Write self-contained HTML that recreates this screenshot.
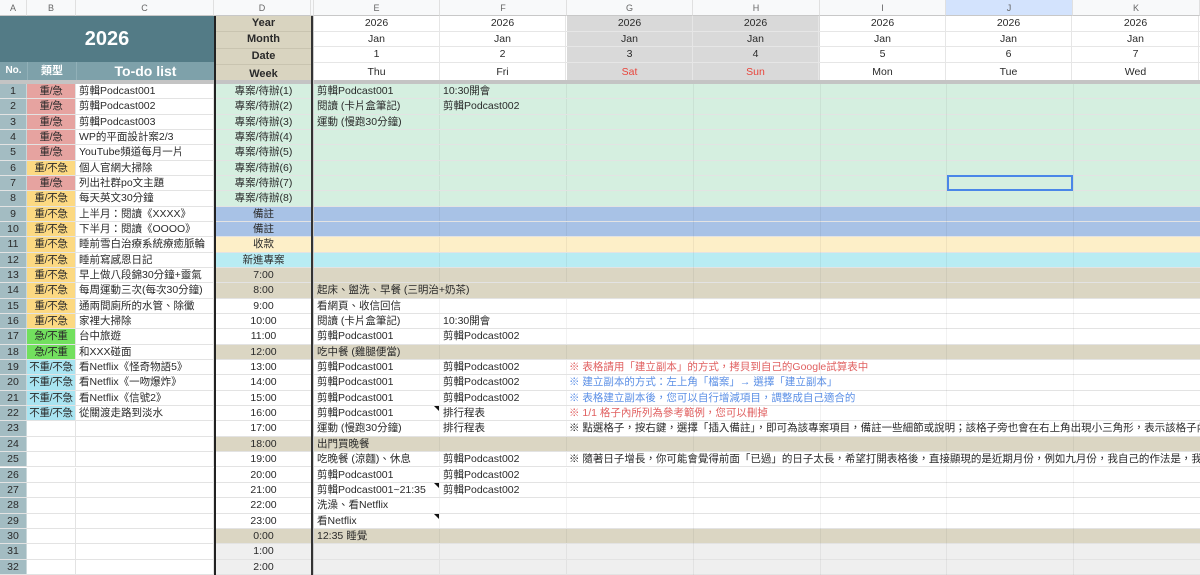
<!DOCTYPE html>
<html><head><meta charset="utf-8">
<style>
*{margin:0;padding:0;box-sizing:border-box}
body{width:1200px;height:575px;overflow:hidden;background:#fff;font-family:"Liberation Sans","Noto Sans CJK TC",sans-serif;font-size:10.5px;color:#2a2a2a;position:relative}
.abs{position:absolute}
.ch{position:absolute;top:0;height:16px;background:#f8f9fa;border-right:1px solid #e0e0e0;border-bottom:1px solid #c8c8c8;color:#666;font-size:9px;text-align:center;line-height:16px}
.hr{position:absolute;left:314px;width:886px;height:15.5px;border-bottom:1px solid #e6e6e6}
.hr span{position:absolute;top:0;text-align:center;line-height:15px;width:126px;border-right:1px solid #e6e6e6;height:100%}
.r{position:absolute;left:0;width:1200px;height:15.34px;border-bottom:1px solid #e3e3e3;line-height:15px;white-space:nowrap}
.r i{font-style:normal;position:absolute;top:0;height:100%;overflow:hidden}
.a{left:0;width:27px;background:#a3bcc2;text-align:center;border-right:1px solid #c9d7da}
.b{left:27px;width:49px;text-align:center;border-right:1px solid #e3e3e3;letter-spacing:-0.3px}
.c{left:76px;width:138px;background:#fff;padding-left:3px;border-right:1px solid #e3e3e3}
.d{left:216px;width:95px;text-align:center}
.e{left:314px;width:126px;padding-left:3px;border-right:1px solid rgba(0,0,0,.05)}
.f{left:440px;width:127px;padding-left:3px;border-right:1px solid rgba(0,0,0,.05)}
.n{left:567px;width:633px;padding-left:2px;overflow:hidden}
.k1{background:#e6a3a0}.k2{background:#fcd982}.k3{background:#72e05e}.k4{background:#a9e4f1}
.g{background:#d5efe0}.bl{background:#a8c2e6}.y{background:#fdefc8}.cy{background:#b8ecf3}.be{background:#dbd6c3}.gr{background:#efefef}.w{background:#fff}
.vl{position:absolute;top:84px;height:491px;width:1px;background:rgba(0,0,0,.05)}
.red{color:#e06060}.blu{color:#5b8fe6}
.tri{position:absolute;width:0;height:0;border-top:5px solid #111;border-left:5px solid transparent}
</style></head><body>
<div class="ch" style="left:0;width:27px">A</div>
<div class="ch" style="left:27px;width:49px">B</div>
<div class="ch" style="left:76px;width:138px">C</div>
<div class="ch" style="left:214px;width:97px">D</div>
<div class="ch" style="left:311px;width:3px"></div>
<div class="ch" style="left:314px;width:126px">E</div>
<div class="ch" style="left:440px;width:127px">F</div>
<div class="ch" style="left:567px;width:126px">G</div>
<div class="ch" style="left:693px;width:127px">H</div>
<div class="ch" style="left:820px;width:126px">I</div>
<div class="ch" style="left:946px;width:127px;background:#d3e3fd">J</div>
<div class="ch" style="left:1073px;width:127px">K</div>

<div class="abs" style="left:0;top:16px;width:214px;height:46px;background:#537b86;color:#fff;font-weight:bold;font-size:20px;text-align:center;line-height:46px">2026</div>
<div class="abs" style="left:0;top:62px;width:27px;height:18px;background:#7ea1aa;color:#fff;font-weight:bold;font-size:10px;text-align:center;line-height:18px">No.</div>
<div class="abs" style="left:27px;top:62px;width:49px;height:18px;background:#7ea1aa;color:#fff;font-weight:bold;font-size:11px;text-align:center;line-height:18px;border-left:1px solid #91b0b8">類型</div>
<div class="abs" style="left:76px;top:62px;width:138px;height:18px;background:#7ea1aa;color:#fff;font-weight:bold;font-size:14px;text-align:center;line-height:18px;border-left:1px solid #91b0b8">To-do list</div>
<div class="abs" style="left:216px;top:16px;width:95px;height:64px;background:#d9d4c0;font-weight:bold;text-align:center;line-height:15.3px;font-size:11px">
<div style="border-bottom:1px solid #c9c4b0">Year</div><div style="border-bottom:1px solid #c9c4b0">Month</div><div style="border-bottom:1px solid #c9c4b0">Date</div><div style="line-height:18px">Week</div></div>
<div class="abs" style="left:567px;top:16px;width:253px;height:64px;background:#d9d9d9"></div>
<div class="hr" style="top:16px"><span style="left:0">2026</span><span style="left:126px">2026</span><span style="left:253px">2026</span><span style="left:379px">2026</span><span style="left:506px">2026</span><span style="left:632px">2026</span><span style="left:759px">2026</span></div>
<div class="hr" style="top:31.5px"><span style="left:0">Jan</span><span style="left:126px">Jan</span><span style="left:253px">Jan</span><span style="left:379px">Jan</span><span style="left:506px">Jan</span><span style="left:632px">Jan</span><span style="left:759px">Jan</span></div>
<div class="hr" style="top:47px"><span style="left:0">1</span><span style="left:126px">2</span><span style="left:253px">3</span><span style="left:379px">4</span><span style="left:506px">5</span><span style="left:632px">6</span><span style="left:759px">7</span></div>
<div class="hr" style="top:62.5px;height:17px;border:none"><span style="left:0;line-height:18px">Thu</span><span style="left:126px;line-height:18px">Fri</span><span style="left:253px;line-height:18px;color:#e8453c">Sat</span><span style="left:379px;line-height:18px;color:#e8453c">Sun</span><span style="left:506px;line-height:18px">Mon</span><span style="left:632px;line-height:18px">Tue</span><span style="left:759px;line-height:18px">Wed</span></div>
<div class="abs" style="left:0;top:80px;width:1200px;height:4px;background:#c4c4c4"></div>

<div class="r g" style="top:84px"><i class="a">1</i><i class="b k1">重/急</i><i class="c">剪輯Podcast001</i><i class="d">專案/待辦(1)</i><i class="e">剪輯Podcast001</i><i class="f">10:30開會</i></div>
<div class="r g" style="top:99.34px"><i class="a">2</i><i class="b k1">重/急</i><i class="c">剪輯Podcast002</i><i class="d">專案/待辦(2)</i><i class="e">閱讀 (卡片盒筆記)</i><i class="f">剪輯Podcast002</i></div>
<div class="r g" style="top:114.68px"><i class="a">3</i><i class="b k1">重/急</i><i class="c">剪輯Podcast003</i><i class="d">專案/待辦(3)</i><i class="e">運動 (慢跑30分鐘)</i><i class="f"></i></div>
<div class="r g" style="top:130.02px"><i class="a">4</i><i class="b k1">重/急</i><i class="c">WP的平面設計案2/3</i><i class="d">專案/待辦(4)</i><i class="e"></i><i class="f"></i></div>
<div class="r g" style="top:145.36px"><i class="a">5</i><i class="b k1">重/急</i><i class="c">YouTube頻道每月一片</i><i class="d">專案/待辦(5)</i><i class="e"></i><i class="f"></i></div>
<div class="r g" style="top:160.7px"><i class="a">6</i><i class="b k2">重/不急</i><i class="c">個人官網大掃除</i><i class="d">專案/待辦(6)</i><i class="e"></i><i class="f"></i></div>
<div class="r g" style="top:176.04px"><i class="a">7</i><i class="b k1">重/急</i><i class="c">列出社群po文主題</i><i class="d">專案/待辦(7)</i><i class="e"></i><i class="f"></i></div>
<div class="r g" style="top:191.38px"><i class="a">8</i><i class="b k2">重/不急</i><i class="c">每天英文30分鐘</i><i class="d">專案/待辦(8)</i><i class="e"></i><i class="f"></i></div>
<div class="r bl" style="top:206.72px"><i class="a">9</i><i class="b k2">重/不急</i><i class="c">上半月：閱讀《XXXX》</i><i class="d">備註</i><i class="e"></i><i class="f"></i></div>
<div class="r bl" style="top:222.06px"><i class="a">10</i><i class="b k2">重/不急</i><i class="c">下半月：閱讀《OOOO》</i><i class="d">備註</i><i class="e"></i><i class="f"></i></div>
<div class="r y" style="top:237.4px"><i class="a">11</i><i class="b k2">重/不急</i><i class="c">睡前雪白治療系統療癒脈輪</i><i class="d">收款</i><i class="e"></i><i class="f"></i></div>
<div class="r cy" style="top:252.74px"><i class="a">12</i><i class="b k2">重/不急</i><i class="c">睡前寫感恩日記</i><i class="d">新進專案</i><i class="e"></i><i class="f"></i></div>
<div class="r be" style="top:268.08px"><i class="a">13</i><i class="b k2">重/不急</i><i class="c">早上做八段錦30分鐘+靈氣</i><i class="d">7:00</i><i class="e"></i><i class="f"></i></div>
<div class="r be" style="top:283.42px"><i class="a">14</i><i class="b k2">重/不急</i><i class="c">每周運動三次(每次30分鐘)</i><i class="d">8:00</i><i class="e" style="overflow:visible">起床、盥洗、早餐 (三明治+奶茶)</i></div>
<div class="r w" style="top:298.76px"><i class="a">15</i><i class="b k2">重/不急</i><i class="c">通兩間廁所的水管、除黴</i><i class="d">9:00</i><i class="e">看網頁、收信回信</i><i class="f"></i></div>
<div class="r w" style="top:314.1px"><i class="a">16</i><i class="b k2">重/不急</i><i class="c">家裡大掃除</i><i class="d">10:00</i><i class="e">閱讀 (卡片盒筆記)</i><i class="f">10:30開會</i></div>
<div class="r w" style="top:329.44px"><i class="a">17</i><i class="b k3">急/不重</i><i class="c">台中旅遊</i><i class="d">11:00</i><i class="e">剪輯Podcast001</i><i class="f">剪輯Podcast002</i></div>
<div class="r be" style="top:344.78px"><i class="a">18</i><i class="b k3">急/不重</i><i class="c">和XXX碰面</i><i class="d">12:00</i><i class="e">吃中餐 (雞腿便當)</i><i class="f"></i></div>
<div class="r w" style="top:360.12px"><i class="a">19</i><i class="b k4">不重/不急</i><i class="c">看Netflix《怪奇物語5》</i><i class="d">13:00</i><i class="e">剪輯Podcast001</i><i class="f">剪輯Podcast002</i><i class="n red">※ 表格請用「建立副本」的方式，拷貝到自己的Google試算表中</i></div>
<div class="r w" style="top:375.46px"><i class="a">20</i><i class="b k4">不重/不急</i><i class="c">看Netflix《一吻爆炸》</i><i class="d">14:00</i><i class="e">剪輯Podcast001</i><i class="f">剪輯Podcast002</i><i class="n blu">※ 建立副本的方式：左上角「檔案」→ 選擇「建立副本」</i></div>
<div class="r w" style="top:390.8px"><i class="a">21</i><i class="b k4">不重/不急</i><i class="c">看Netflix《信號2》</i><i class="d">15:00</i><i class="e">剪輯Podcast001</i><i class="f">剪輯Podcast002</i><i class="n blu">※ 表格建立副本後，您可以自行增減項目，調整成自己適合的</i></div>
<div class="r w" style="top:406.14px"><i class="a">22</i><i class="b k4">不重/不急</i><i class="c">從關渡走路到淡水</i><i class="d">16:00</i><i class="e">剪輯Podcast001</i><i class="f">排行程表</i><i class="n red">※ 1/1 格子內所列為參考範例，您可以刪掉</i></div>
<div class="r w" style="top:421.48px"><i class="a">23</i><i class="b"></i><i class="c"></i><i class="d">17:00</i><i class="e">運動 (慢跑30分鐘)</i><i class="f">排行程表</i><i class="n">※ 點選格子，按右鍵，選擇「插入備註」，即可為該專案項目，備註一些細節或說明；該格子旁也會在右上角出現小三角形，表示該格子內有備註內容</i></div>
<div class="r be" style="top:436.82px"><i class="a">24</i><i class="b w"></i><i class="c"></i><i class="d">18:00</i><i class="e">出門買晚餐</i><i class="f"></i></div>
<div class="r w" style="top:452.16px"><i class="a">25</i><i class="b"></i><i class="c"></i><i class="d">19:00</i><i class="e">吃晚餐 (涼麵)、休息</i><i class="f">剪輯Podcast002</i><i class="n">※ 隨著日子增長，你可能會覺得前面「已過」的日子太長，希望打開表格後，直接顯現的是近期月份，例如九月份，我自己的作法是，我會把1-8月的欄位隱藏</i></div>
<div class="r w" style="top:467.5px"><i class="a">26</i><i class="b"></i><i class="c"></i><i class="d">20:00</i><i class="e">剪輯Podcast001</i><i class="f">剪輯Podcast002</i></div>
<div class="r w" style="top:482.84px"><i class="a">27</i><i class="b"></i><i class="c"></i><i class="d">21:00</i><i class="e">剪輯Podcast001~21:35</i><i class="f">剪輯Podcast002</i></div>
<div class="r w" style="top:498.18px"><i class="a">28</i><i class="b"></i><i class="c"></i><i class="d">22:00</i><i class="e">洗澡、看Netflix</i><i class="f"></i></div>
<div class="r w" style="top:513.52px"><i class="a">29</i><i class="b"></i><i class="c"></i><i class="d">23:00</i><i class="e">看Netflix</i><i class="f"></i></div>
<div class="r be" style="top:528.86px"><i class="a">30</i><i class="b w"></i><i class="c"></i><i class="d">0:00</i><i class="e">12:35 睡覺</i><i class="f"></i></div>
<div class="r gr" style="top:544.2px"><i class="a">31</i><i class="b w"></i><i class="c"></i><i class="d">1:00</i><i class="e"></i><i class="f"></i></div>
<div class="r gr" style="top:559.54px"><i class="a">32</i><i class="b w"></i><i class="c"></i><i class="d">2:00</i><i class="e"></i><i class="f"></i></div>

<div class="vl" style="left:693px"></div><div class="vl" style="left:820px"></div><div class="vl" style="left:946px"></div><div class="vl" style="left:1073px"></div>
<div class="abs" style="left:214px;top:16px;width:2px;height:559px;background:#222"></div>
<div class="abs" style="left:311px;top:16px;width:2px;height:559px;background:#333"></div>
<div class="abs" style="left:313px;top:16px;width:1px;height:559px;background:#ccc"></div>

<div class="tri" style="left:434px;top:406px"></div>
<div class="tri" style="left:434px;top:483px"></div>
<div class="tri" style="left:434px;top:514px"></div>

<div class="abs" style="left:947px;top:175px;width:126px;height:16px;border:2px solid #4a86e8"></div>
</body></html>
